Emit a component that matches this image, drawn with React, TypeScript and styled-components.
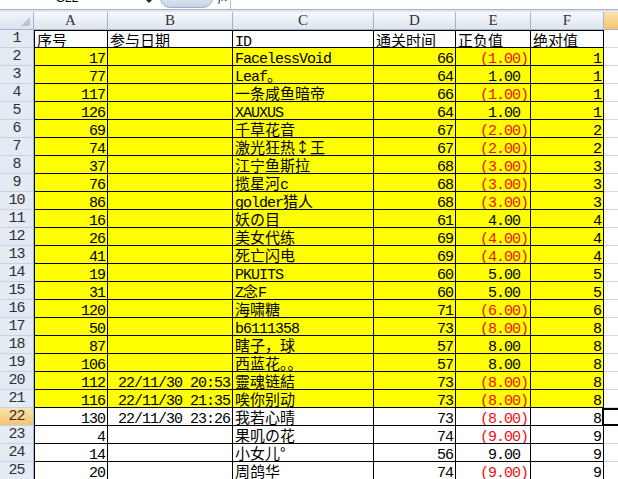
import React from 'react';
import styled, { createGlobalStyle, css } from 'styled-components';

const Global = createGlobalStyle`
  html, body { margin: 0; padding: 0; background: #fff; }
  body { width: 618px; height: 479px; overflow: hidden; }
`;

const TEMPLATE = '34px 74px 125px 141px 82px 75px 73px 73px';

const Page = styled.div`
  width: 618px;
  height: 479px;
  overflow: hidden;
  display: flex;
  flex-direction: column;
`;

const FormulaBar = styled.div`
  height: 9px;
  flex: none;
  display: flex;
  align-items: flex-start;
  background: #fff;
  border-bottom: 1px solid #a3b2c6;
  overflow: hidden;
`;

const NameBox = styled.div`
  width: 134px;
  display: flex;
  justify-content: center;
  margin-top: -8px;
  font: 12px/12px "Liberation Sans", sans-serif;
  color: #000;
`;

const DropArrow = styled.div`
  width: 0;
  height: 0;
  margin-left: 12px;
  border-left: 3px solid transparent;
  border-right: 3px solid transparent;
  border-top: 3px solid #222;
`;

const FxPill = styled.div`
  width: 53px;
  height: 20px;
  margin-top: -12px;
  margin-left: 8px;
  box-sizing: border-box;
  border-radius: 10px;
  border: 1px solid #9fb0c8;
  background: linear-gradient(#f6f8fc, #c6d3e6);
`;

const FxLabel = styled.div`
  margin-left: 5px;
  margin-top: -10px;
  font: italic 13px/13px "Liberation Serif", serif;
  color: #333;
`;

const FormulaInput = styled.div`
  flex: 1;
  height: 9px;
  margin-left: 3px;
  border-left: 1px solid #b5c2d4;
  background: #fff;
`;

const Band = styled.div`
  height: 2px;
  flex: none;
  background: #dfe6ef;
`;

const Row = styled.div`
  display: grid;
  grid-template-columns: ${TEMPLATE};
  height: 18px;
  flex: none;
`;

const Corner = styled.div`
  position: relative;
  box-sizing: border-box;
  border-right: 1px solid #9eb6ce;
  border-bottom: 1px solid #9eb6ce;
  background: linear-gradient(#f2f5fa, #dbe3ee);
  &::after {
    content: '';
    position: absolute;
    right: 3px;
    bottom: 3px;
    width: 0;
    height: 0;
    border-left: 9px solid transparent;
    border-bottom: 9px solid #b9c5d5;
  }
`;

const orange = css`
  background: linear-gradient(#fbe2b1, #f3c56d);
`;

const ColHead = styled.div<{ $sel?: boolean }>`
  box-sizing: border-box;
  border-right: 1px solid #9eb6ce;
  border-bottom: 1px solid #9eb6ce;
  background: linear-gradient(#f6f8fb, #dde5ef);
  ${(p) => p.$sel && orange}
  text-align: center;
  font: 15px/17px "Liberation Serif", serif;
  color: #333;
  overflow: hidden;
`;

const RowHead = styled.div<{ $sel?: boolean }>`
  box-sizing: border-box;
  border-right: 1px solid #9eb6ce;
  border-bottom: 1px solid #c5d2e2;
  background: #e4ebf5;
  ${(p) => p.$sel && orange}
  text-align: center;
  font: 15px/17px "Liberation Mono", monospace;
  letter-spacing: -1px;
  color: #303030;
  overflow: hidden;
`;

const Cell = styled.div<{ $fill?: boolean; $align?: 'left' | 'right'; $top?: boolean; $first?: boolean }>`
  box-sizing: border-box;
  height: 18px;
  border-right: 1px solid #000;
  border-bottom: 1px solid #000;
  ${(p) => p.$top && 'border-top: 1px solid #000;'}
  ${(p) => p.$first && 'border-left: 1px solid #000;'}
  background: ${(p) => (p.$fill ? '#ffff00' : '#fff')};
  text-align: ${(p) => p.$align || 'left'};
  padding: 0 ${(p) => (p.$align === 'right' ? '2px' : '0')} 0 ${(p) => (p.$align === 'right' ? '0' : '2px')};
  font: 15px/17px "Noto Sans CJK SC", sans-serif;
  color: #000;
  white-space: nowrap;
  overflow: hidden;
`;

const GCell = styled.div<{ $active?: boolean }>`
  position: relative;
  box-sizing: border-box;
  border-bottom: 1px solid #d0d7e5;
  background: #fff;
  ${(p) =>
    p.$active &&
    css`
      &::after {
        content: '';
        position: absolute;
        top: 0;
        left: -2px;
        right: -4px;
        bottom: -1px;
        border: 2px solid #000;
        z-index: 2;
      }
    `}
`;

const Latin = styled.span`
  font-family: "Liberation Mono", monospace;
  letter-spacing: -1px;
`;

const Neg = styled.span`
  color: #f01010;
`;

const Pad = styled.span`
  display: inline-block;
  width: 8px;
`;

function T({ s }: { s: string }) {
  const parts = s.match(/[\x20-\x7e]+|[^\x20-\x7e]+/g) || [];
  return (
    <>
      {parts.map((p, i) =>
        /^[\x20-\x7e]+$/.test(p) ? <Latin key={i}>{p}</Latin> : <span key={i}>{p}</span>
      )}
    </>
  );
}

type R = [number, string, string, number, number, number];

const data: R[] = [
  [17, '', 'FacelessVoid', 66, -1, 1],
  [77, '', 'Leaf。', 64, 1, 1],
  [117, '', '一条咸鱼暗帝', 66, -1, 1],
  [126, '', 'XAUXUS', 64, 1, 1],
  [69, '', '千草花音', 67, -2, 2],
  [74, '', '激光狂热↕王', 67, -2, 2],
  [37, '', '江宁鱼斯拉', 68, -3, 3],
  [76, '', '揽星河c', 68, -3, 3],
  [86, '', 'golder猎人', 68, -3, 3],
  [16, '', '妖の目', 61, 4, 4],
  [26, '', '美女代练', 69, -4, 4],
  [41, '', '死亡闪电', 69, -4, 4],
  [19, '', 'PKUITS', 60, 5, 5],
  [31, '', 'Z念F', 60, 5, 5],
  [120, '', '海啸糖', 71, -6, 6],
  [50, '', 'b6111358', 73, -8, 8],
  [87, '', '瞎子，球', 57, 8, 8],
  [106, '', '西蓝花。。', 57, 8, 8],
  [112, '22/11/30 20:53', '靈魂链結', 73, -8, 8],
  [116, '22/11/30 21:35', '唉你别动', 73, -8, 8],
  [130, '22/11/30 23:26', '我若心晴', 73, -8, 8],
  [4, '', '果叽の花', 74, -9, 9],
  [14, '', '小女儿°', 56, 9, 9],
  [20, '', '周鸽华', 74, -9, 9],
];

const headers = ['序号', '参与日期', 'ID', '通关时间', '正负值', '绝对值'];

function Money({ v }: { v: number }) {
  const txt = Math.abs(v).toFixed(2);
  if (v < 0)
    return (
      <Neg>
        <Latin>({txt})</Latin>
      </Neg>
    );
  return (
    <>
      <Latin>{txt}</Latin>
      <Pad />
    </>
  );
}

export default function App() {
  return (
    <Page>
      <Global />
      <FormulaBar>
        <NameBox>G22</NameBox>
        <DropArrow />
        <FxPill />
        <FxLabel>fx</FxLabel>
        <FormulaInput />
      </FormulaBar>
      <Band />
      <Row>
        <Corner />
        {['A', 'B', 'C', 'D', 'E', 'F', 'G'].map((c) => (
          <ColHead key={c} $sel={c === 'G'}>
            {c}
          </ColHead>
        ))}
      </Row>
      <Row>
        <RowHead>1</RowHead>
        {headers.map((h, i) => (
          <Cell key={h} $top $first={i === 0}>
            <T s={h} />
          </Cell>
        ))}
        <GCell />
      </Row>
      {data.map((r, i) => {
        const n = i + 2;
        const fill = n <= 21;
        return (
          <Row key={n}>
            <RowHead $sel={n === 22}>{n}</RowHead>
            <Cell $fill={fill} $align="right" $first>
              <Latin>{r[0]}</Latin>
            </Cell>
            <Cell $fill={fill} $align="right">
              <T s={r[1]} />
            </Cell>
            <Cell $fill={fill}>
              <T s={r[2]} />
            </Cell>
            <Cell $fill={fill} $align="right">
              <Latin>{r[3]}</Latin>
            </Cell>
            <Cell $fill={fill} $align="right">
              <Money v={r[4]} />
            </Cell>
            <Cell $fill={fill} $align="right">
              <Latin>{r[5]}</Latin>
            </Cell>
            <GCell $active={n === 22} />
          </Row>
        );
      })}
    </Page>
  );
}
